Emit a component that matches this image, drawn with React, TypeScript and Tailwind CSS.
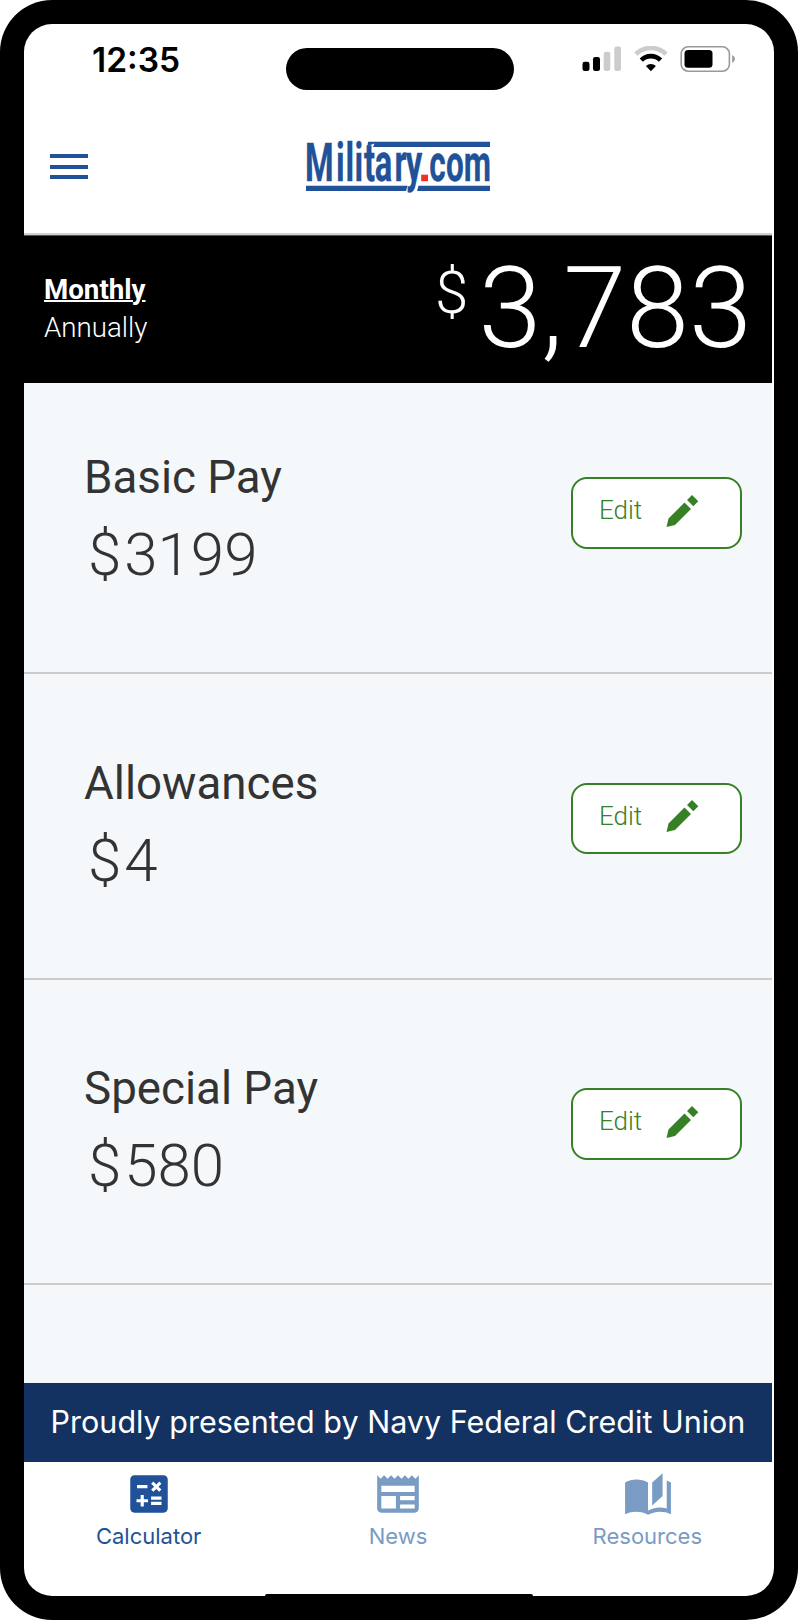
import { MdCalculate, MdNewspaper } from "react-icons/md";

const payItems = [
  { name: "Basic Pay", amount: "3199" },
  { name: "Allowances", amount: "4" },
  { name: "Special Pay", amount: "580" },
];

function BookIcon({ size }: { size: number }) {
  return (
    <svg width={size} height={size} viewBox="0 0 24 24" fill="currentColor">
      <path d="M19 2L14 6.500V17.500L19 13V2Z" />
      <path d="M6.500 5C4.550 5 2.450 5.400 1 6.500V21.700C2.500 20.900 4.700 20.500 6.500 20.500C8.450 20.500 10.550 20.900 12 22C13.350 21.150 15.800 20.500 17.500 20.500C19.500 20.500 21.500 20.900 23 21.700V6.500C22.400 6.050 21.750 5.750 21 5.500V19C19.900 18.650 18.700 18.500 17.500 18.500C15.800 18.500 13.350 19.150 12 20V6.500C10.550 5.400 8.450 5 6.500 5Z" />
    </svg>
  );
}

const tabs = [
  { label: "Calculator", Icon: MdCalculate, active: true },
  { label: "News", Icon: MdNewspaper, active: false },
  { label: "Resources", Icon: BookIcon, active: false },
];

function StatusIcons() {
  return (
    <svg width="156" height="28" viewBox="0 0 156 28">
      {/* Signal */}
      <rect x="0.5" y="15.7" width="7" height="9.3" rx="2.2" />
      <rect x="11" y="11" width="7" height="14" rx="2.2" />
      <rect x="21.7" y="5.8" width="6.6" height="19.2" rx="2.2" fill="#cccccc" />
      <rect x="32.3" y="0.5" width="6.7" height="24.5" rx="2.2" fill="#cccccc" />
      {/* Wifi */}
      <path
        d="M53.8 8.2 A21.500 21.500 0 0 1 84 8.200"
        fill="none"
        stroke="#cccccc"
        strokeWidth="4.6"
      />
      <path
        d="M59.3 14.100 A13.500 13.500 0 0 1 78.500 14.100"
        fill="none"
        stroke="#000"
        strokeWidth="4.6"
      />
      <path d="M68.9 25.200 L63.900 20 A7.500 7.500 0 0 1 73.900 20 Z" />
      {/* Battery */}
      <rect
        x="99.2"
        y="0.8"
        width="48.2"
        height="24.4"
        rx="7"
        fill="none"
        stroke="#999999"
        strokeWidth="1.6"
      />
      <rect x="102.500" y="4" width="28" height="17.800" rx="3.500" />
      <path d="M150.200 9 Q153 10.500 153 13 Q153 15.500 150.200 17 Z" fill="#999999" />
    </svg>
  );
}

function Logo() {
  return (
    <svg width="186" height="54" viewBox="0 0 186 54" className="overflow-visible">
      <g fill="#215299">
        <path d="M63 2.700 H185 V8 H68 L69.500 4.500 L62.500 7Z" />
        <path d="M1 46.700 H102.500 L101 52 H1Z" />
        <path d="M113.500 46.700 H185 V52 H112Z" />
      </g>
      {/* Letters are squeezed to a condensed face */}
      <g
        transform="scale(0.6 1)"
        fill="#215299"
        stroke="#215299"
        strokeWidth="0.3"
        fontSize="54.5"
        className="font-['Roboto'] font-bold"
      >
        <text x="0 51.5 67.5 82.7 98.5 116.3 149 168" y="42.2">
          Military
        </text>
        <text x="207 235 264.5" y="42.2" fontSize="52.5">
          com
        </text>
      </g>
      <rect x="116.200" y="35.700" width="6.800" height="6.500" fill="#ee3124" />
    </svg>
  );
}

function EditButton() {
  return (
    <button className="mr-[30px] mb-[123.500px] flex h-[71.500px] w-[171.500px] rounded-2xl border-2 border-[#368126] bg-white pl-[26.500px] text-[#368126]">
      <span className="mt-[13px] w-[67px] text-left text-[26px] leading-9 font-light">
        Edit
      </span>
      <svg width="34" height="34" viewBox="0 0 34 34" className="mt-[15.500px]">
        <path
          d="M0.500 32 L2.500 23.500 L18.500 7.500 L25 14 L9 30 Z M21 5 L26 0 L32.300 6.300 L27.300 11.300 Z"
          fill="currentColor"
        />
      </svg>
    </button>
  );
}

export default function App() {
  return (
    <div className="h-[1620px] w-[798px] bg-white">
      <div className="h-full w-full rounded-[52px] bg-black p-6 font-['Roboto',sans-serif]">
        <div className="relative flex h-[1572px] w-[750px] flex-col overflow-hidden rounded-[28px] bg-white">
          {/* Status bar */}
          <div className="flex h-[88px]">
            <div className="w-[262px] pt-[16px] pl-[68px] font-['Inter'] text-[33.500px] leading-[40px] font-semibold">
              12:35
            </div>
            <div className="mt-6 h-[42px] w-[228px] rounded-full bg-black" />
            <div className="mt-[22px] ml-[68px]">
              <StatusIcons />
            </div>
          </div>

          {/* Header */}
          <header className="flex h-[123px] w-[748px] border-b-2 border-[#cfd1d1]">
            <div className="mt-[42px] ml-[26px] flex w-[38px] flex-col gap-[6.500px]">
              <div className="h-[4px] bg-[#215299]" />
              <div className="h-[4px] bg-[#215299]" />
              <div className="h-[4px] bg-[#215299]" />
            </div>
            <div className="mt-[27px] ml-[217px]">
              <Logo />
            </div>
          </header>

          {/* Total */}
          <div className="flex h-[148px] w-[748px] justify-between border-t border-[#555555] bg-black pr-[20px] pl-[20px] text-white">
            <div className="pt-[35px] text-[27.700px] leading-[38px]">
              <div className="font-bold underline decoration-2">Monthly</div>
              <div className="font-light">Annually</div>
            </div>
            <div className="flex font-light">
              <span className="mt-[17px] mr-[10px] text-[60px] leading-[80px]">
                $
              </span>
              <span className="text-[113.500px] leading-[145px]">3,783</span>
            </div>
          </div>

          {/* Pay sections */}
          <main className="h-[1000px] w-[748px] bg-[#f4f8fb] text-[#333333]">
            {payItems.map((item) => (
              <section
                key={item.name}
                className="flex h-[305.500px] items-end justify-between border-b-2 border-[#cccccc] first:h-[291px]"
              >
                <div className="mb-[81px] pl-[60px]">
                  <h2 className="text-[45.700px] leading-[60px]">{item.name}</h2>
                  <p className="mt-[11px] pl-1 text-[60px] leading-[72px] font-light">
                    <span className="mr-[3px]">$</span>
                    {item.amount}
                  </p>
                </div>
                <EditButton />
              </section>
            ))}
          </main>

          {/* Sponsor */}
          <div className="h-[79px] w-[748px] bg-[#133262] text-center font-['Inter'] text-[30.500px] leading-[77px] text-white">
            Proudly presented by Navy Federal Credit Union
          </div>

          {/* Bottom tabs */}
          <nav className="flex h-[132px] w-[748px] pt-[7px]">
            {tabs.map(({ label, Icon, active }) => (
              <div
                key={label}
                className={`flex flex-1 flex-col items-center ${
                  active ? "text-[#215299]" : "text-[#799bc4]"
                }`}
              >
                <div className="pl-[1px]">
                  <Icon size={50} />
                </div>
                <span className="mt-[3px] font-['Inter'] text-[22px] leading-[28px]">
                  {label}
                </span>
              </div>
            ))}
          </nav>
          <div className="absolute bottom-0 left-[241px] h-[2px] w-[268px] rounded-t-full bg-black" />
        </div>
      </div>
    </div>
  );
}
